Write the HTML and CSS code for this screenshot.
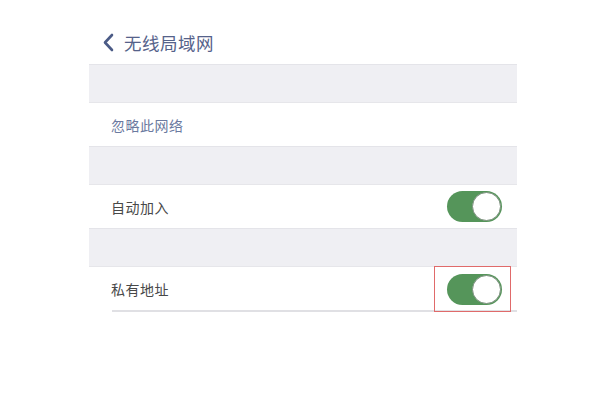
FILE: index.html
```html
<!DOCTYPE html>
<html lang="zh-CN">
<head>
  <meta charset="UTF-8" />
  <meta name="viewport" content="width=device-width, initial-scale=1.0"/>
  <title>无线局域网</title>
  <link rel="stylesheet" href="styles.css">
</head>
<body>
  <div class="screen">
    <div class="nav">
      <svg class="back" width="12" height="19" viewBox="0 0 12 19">
        <path d="M10 2 L3 9.5 L10 17" fill="none" stroke="#4b5b86" stroke-width="2.6" stroke-linecap="round" stroke-linejoin="round"/>
      </svg>
      <span class="nav-title">无线局域网</span>
    </div>

    <div class="gap"></div>
    <div class="row">
      <span class="link">忽略此网络</span>
    </div>

    <div class="gap"></div>
    <div class="row">
      <span class="label">自动加入</span>
      <div class="switch on"><div class="knob"></div></div>
    </div>

    <div class="gap"></div>
    <div class="row last">
      <span class="label">私有地址</span>
      <div class="mark">
        <div class="switch on"><div class="knob"></div></div>
      </div>
    </div>
  </div>
</body>
</html>
```

FILE: styles.css
```css
body {
  margin: 0;
  background: #fff;
  font-family: "Noto Sans CJK SC", "Noto Sans", sans-serif;
}
.screen {
  margin-left: 89px;
  width: 428px;
  padding-bottom: 40px;
}
.nav {
  height: 44px;
  padding-top: 20px;
  display: flex;
  align-items: center;
  padding-left: 13px;
}
.back {
  margin-right: 10px;
}
.nav-title {
  font-size: 17.5px;
  color: #55628a;
  letter-spacing: 0.5px;
}
.gap {
  height: 37px;
  background: #efeff3;
  border-top: 1px solid #e4e4e9;
}
.row {
  height: 43px;
  display: flex;
  align-items: center;
  justify-content: space-between;
  padding: 0 15px 0 22px;
  border-top: 1px solid #e6e6ea;
}
.row.last {
  height: 45px;
  padding-right: 6px;
  align-items: flex-start;
  background: linear-gradient(#e0e0e4, #e0e0e4) 23px 100% / calc(100% - 22px) 2px no-repeat;
}
.row.last .label {
  margin-top: 12px;
}
.mark {
  height: 46px;
  margin-top: -1px;
  width: 77px;
  box-sizing: border-box;
  border: 1px solid #e06a6a;
  display: flex;
  align-items: center;
  padding-left: 12px;
}
.link {
  font-size: 14px;
  color: #6b7aa0;
  letter-spacing: 0.5px;
}
.label {
  font-size: 14px;
  color: #484848;
  letter-spacing: 0.5px;
}
.switch {
  width: 55px;
  height: 31px;
  border-radius: 16px;
  background: #55955a;
  display: flex;
  justify-content: flex-end;
  align-items: center;
  padding: 0 1px;
  box-sizing: border-box;
}
.knob {
  width: 29px;
  height: 29px;
  border-radius: 50%;
  background: #fff;
  border: 1.5px solid #7a8e7c;
  box-sizing: border-box;
}
```
